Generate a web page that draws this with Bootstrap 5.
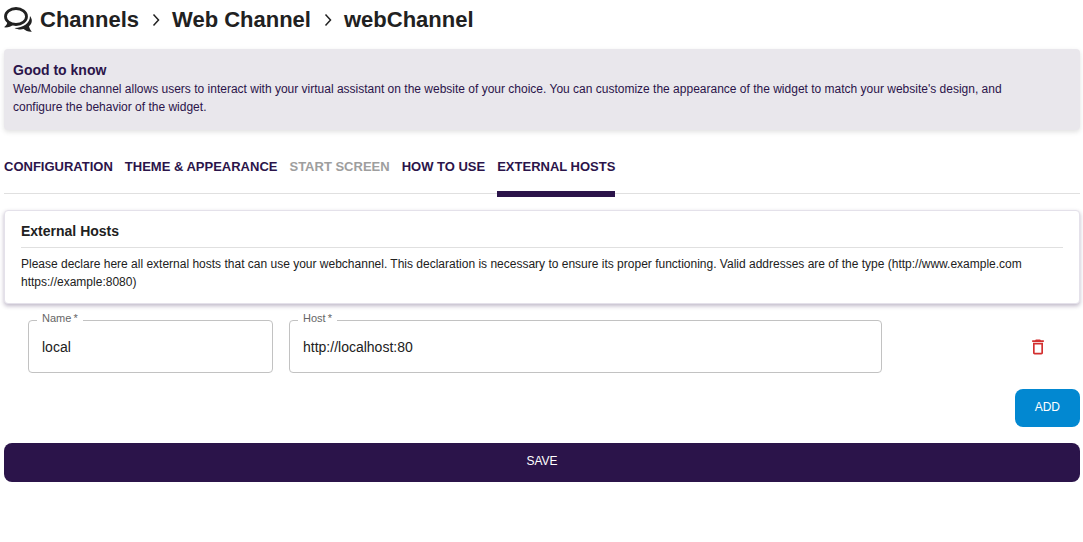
<!DOCTYPE html>
<html lang="en">
<head>
<meta charset="utf-8">
<meta name="viewport" content="width=device-width, initial-scale=1">
<title>Web Channel – External Hosts</title>
<link href="https://cdn.jsdelivr.net/npm/bootstrap@5.3.0/dist/css/bootstrap.min.css" rel="stylesheet">
<style>
:root { --ink: #212121; --brand: #2b144a; --line: #e0e0e0; }
body { font-family: "Liberation Sans", Arial, sans-serif; font-size: 14px; color: var(--ink); }
.page { padding: 4px 3px 0 4px; }
.crumbs { height: 32px; font-size: 22px; font-weight: 700; line-height: 32px; }
.crumbs a { color: var(--ink); text-decoration: none; }
.crumb-logo { width: 28px; height: 26px; }
.copy { font-size: 12px; line-height: 18px; }
.info { margin-top: 13px; padding: 12px 32px 14px 9px; border: 0; border-radius: 4px; background: #e9e7ec; color: var(--brand); box-shadow: 0 2px 5px rgba(0,0,0,.12); }
.info h2, .panel h2 { font-size: 14px; font-weight: 700; line-height: 19px; margin: 0; }
.tabs { margin-top: 16px; height: 48px; gap: 12px; border-bottom: 1px solid var(--line); }
.tabs .nav-link { padding: 12px 0 0; height: 51px; font-size: 13px; font-weight: 700; line-height: 18px; color: var(--brand); white-space: nowrap; }
.tabs .nav-link.disabled { color: #9e9e9e; }
.tabs .nav-link.active { border-bottom: 6px solid var(--brand); }
.panel { margin-top: 16px; padding: 11px 16px 12px; border: 1px solid #e4e1ea; border-radius: 4px; box-shadow: 0 2px 4px rgba(43,20,74,.3); }
.panel h2 { padding-bottom: 6px; border-bottom: 1px solid var(--line); margin-bottom: 7px; }
.hosts { margin: 16px 24px 0 8px; }
.outlined { position: relative; }
.outlined label { position: absolute; left: 9px; top: -10px; padding: 0 5px; background: #fff; font-size: 11px; line-height: 16px; color: #666; }
.outlined .form-control { height: 53px; padding: 0 13px; font-size: 14px; color: var(--ink); border: 1px solid #c2c2c2; border-radius: 4px; }
.trash { width: 20px; height: 20px; fill: #d32f2f; }
.action { border: 0; border-radius: 8px; font-size: 12px; line-height: 18px; color: #fff; }
.add { margin-top: 16px; padding: 9px 20px 11px; background: #0288d1; }
.save { margin-top: 16px; padding: 9px 10px 12px; background: var(--brand); }
</style>
</head>
<body>
<main class="page">
  <nav class="crumbs d-flex align-items-center" aria-label="Breadcrumb">
    <svg class="crumb-logo me-2" viewBox="0 0 28 26" aria-hidden="true"><ellipse cx="12" cy="9.500" rx="10.500" ry="8" fill="none" stroke="#212121" stroke-width="2.800"/><path d="M3.500 14C3.500 17 2 18.800 0 20.300c3.500.5 7-.6 9.500-2.800z" fill="#212121"/><path d="M26 9C28.800 12.500 28.300 16.800 25 19.300c.4 2.200 1.600 3.900 2.800 5.400-3.500.2-6.200-.8-8.200-2.600-3.500.7-6.500.2-9-1.200C19 20.800 26 16.500 26 9z" fill="#212121"/></svg>
    <a href="#">Channels</a>
    <svg class="mx-2" width="17" height="16" viewBox="0 0 17 16" aria-hidden="true"><path d="M6.500 2.500l5 5.500-5 5.500" fill="none" stroke="#212121" stroke-width="1.500"/></svg>
    <a href="#">Web Channel</a>
    <svg class="mx-2" width="17" height="16" viewBox="0 0 17 16" aria-hidden="true"><path d="M6.500 2.500l5 5.500-5 5.500" fill="none" stroke="#212121" stroke-width="1.500"/></svg>
    <a href="#" aria-current="page">webChannel</a>
  </nav>

  <section class="card info">
    <h2>Good to know</h2>
    <p class="copy mb-0">Web/Mobile channel allows users to interact with your virtual assistant on the website of your choice. You can customize the appearance of the widget to match your website's design, and configure the behavior of the widget.</p>
  </section>

  <ul class="nav tabs flex-nowrap">
    <li><a class="nav-link" href="#">CONFIGURATION</a></li>
    <li><a class="nav-link" href="#">THEME &amp; APPEARANCE</a></li>
    <li><a class="nav-link disabled" href="#" aria-disabled="true">START SCREEN</a></li>
    <li><a class="nav-link" href="#">HOW TO USE</a></li>
    <li><a class="nav-link active" href="#">EXTERNAL HOSTS</a></li>
  </ul>

  <section class="card panel">
    <h2>External Hosts</h2>
    <p class="copy mb-0">Please declare here all external hosts that can use your webchannel. This declaration is necessary to ensure its proper functioning. Valid addresses are of the type (http://www.example.com https://example:8080)</p>
  </section>

  <form>
    <div class="hosts row gx-0 align-items-center">
      <div class="col-3 ps-3"><div class="outlined"><label for="name">Name&thinsp;*</label><input class="form-control" id="name" value="local"></div></div>
      <div class="col-7 ps-3"><div class="outlined"><label for="host">Host&thinsp;*</label><input class="form-control" id="host" value="http://localhost:80"></div></div>
      <div class="col-2 text-end pe-2"><button type="button" class="btn p-0 border-0" aria-label="Delete host"><svg class="trash" viewBox="0 0 24 24"><path d="M6 19c0 1.100.9 2 2 2h8c1.100 0 2-.9 2-2V7H6v12zM8 9h8v10H8V9zm7.500-5l-1-1h-5l-1 1H5v2h14V4h-3.500z"/></svg></button></div>
    </div>
    <div class="d-flex justify-content-end"><button type="button" class="btn action add">ADD</button></div>
    <button type="submit" class="btn action save w-100 d-block">SAVE</button>
  </form>
</main>
<script src="https://cdn.jsdelivr.net/npm/bootstrap@5.3.0/dist/js/bootstrap.bundle.min.js"></script>
</body>
</html>
